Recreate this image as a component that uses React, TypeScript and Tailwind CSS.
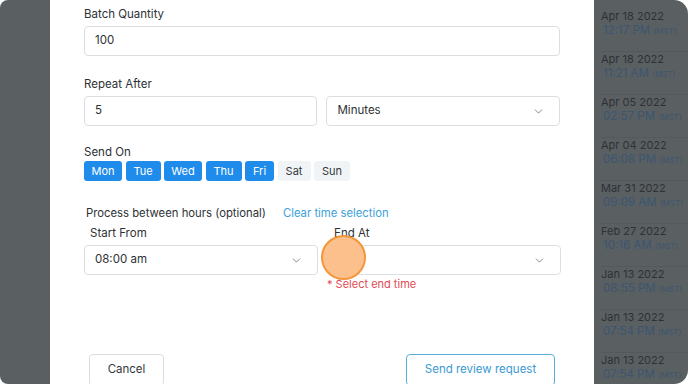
import { ChevronDown } from "lucide-react";

const days = [
    { label: "Mon", on: true, w: "w-[38px]" },
    { label: "Tue", on: true, w: "w-[35px]" },
    { label: "Wed", on: true, w: "w-[38px]" },
    { label: "Thu", on: true, w: "w-[36px]" },
    { label: "Fri", on: true, w: "w-[29px]" },
    { label: "Sat", on: false, w: "w-[33px]" },
    { label: "Sun", on: false, w: "w-[36px]" },
];

const history = [
    ["Apr 18 2022", "12:17 PM"],
    ["Apr 18 2022", "11:21 AM"],
    ["Apr 05 2022", "02:57 PM"],
    ["Apr 04 2022", "06:08 PM"],
    ["Mar 31 2022", "09:09 AM"],
    ["Feb 27 2022", "10:16 AM"],
    ["Jan 13 2022", "08:55 PM"],
    ["Jan 13 2022", "07:54 PM"],
    ["Jan 13 2022", "07:54 PM"],
];

function Select({ value }: { value?: string }) {
    return (
        <div className="flex h-[30px] w-[234px] items-center justify-between rounded-[4px] border border-[#dcdfe2] bg-white pl-[10px] pr-[14px] text-[11.5px] text-[#2d3135]">
            <span>{value}</span>
            <ChevronDown size={13} strokeWidth={1.5} className="text-[#6b7075]" />
        </div>
    );
}

export default function App() {
    return (
        <div
            className="h-[384px] w-[688px] overflow-hidden bg-white"
            style={{ fontFamily: "Inter, 'Noto Sans', sans-serif" }}
        >
            <div className="flex h-full overflow-hidden rounded-l-[8px] rounded-r-[14px]">
                {/* dimmed page, left */}
                <div className="w-[50px] shrink-0 bg-[#5a5f62]" />

                {/* modal */}
                <div className="relative w-[544px] shrink-0 bg-white px-[34px] pt-[6px]">
                    <p className="text-[11.5px] leading-[16px] text-[#2d3135]">Batch Quantity</p>
                    <div className="mt-[4px] flex h-[30px] w-[476px] items-center rounded-[4px] border border-[#dcdfe2] pl-[10px] text-[11.5px] text-[#2d3135]">
                        100
                    </div>

                    <p className="mt-[20px] text-[11.5px] leading-[16px] text-[#2d3135]">Repeat After</p>
                    <div className="mt-[4px] flex gap-[9px]">
                        <div className="flex h-[30px] w-[234px] items-center rounded-[4px] border border-[#dcdfe2] pl-[10px] text-[11.5px] text-[#2d3135]">
                            5
                        </div>
                        <Select value="Minutes" />
                    </div>

                    <p className="mt-[18px] text-[11.5px] leading-[16px] text-[#2d3135]">Send On</p>
                    <div className="mt-[1px] flex gap-[3.5px]">
                        {days.map((d) => (
                            <div
                                key={d.label}
                                className={`${d.w} flex h-[20px] items-center justify-center rounded-[3px] text-[11px] ${
                                    d.on ? "bg-[#1f8ceb] text-white" : "bg-[#f1f4f7] text-[#33383c]"
                                }`}
                            >
                                {d.label}
                            </div>
                        ))}
                    </div>

                    <div className="mt-[24px] flex items-center gap-[17px] pl-[2px] text-[11.3px] leading-[16px]">
                        <span className="text-[#2d3135]">Process between hours (optional)</span>
                        <span className="text-[#3d9fd9]">Clear time selection</span>
                    </div>

                    <div className="mt-[4px] flex gap-[9px]">
                        <div>
                            <p className="pl-[6px] text-[11.5px] leading-[16px] text-[#2d3135]">Start From</p>
                            <div className="mt-[4px]">
                                <Select value="08:00 am" />
                            </div>
                        </div>
                        <div>
                            <p className="pl-[7px] text-[11.5px] leading-[16px] text-[#2d3135]">End At</p>
                            <div className="mt-[4px]">
                                <Select />
                            </div>
                            <p className="mt-[2px] text-[11px] leading-[14px] text-[#e24a53]">* Select end time</p>
                        </div>
                    </div>

                    <div className="mt-[63px] flex justify-between pl-[5px] pr-[5px]">
                        <div className="flex h-[32px] w-[75px] items-center justify-center rounded-[4px] border border-[#d9dde0] text-[11.5px] text-[#33383c]">
                            Cancel
                        </div>
                        <div className="flex h-[32px] w-[149px] items-center justify-center rounded-[4px] border border-[#5aaedc] text-[11.5px] text-[#3a9ad3]">
                            Send review request
                        </div>
                    </div>

                    {/* click indicator */}
                    <div className="absolute left-[271px] top-[235px] h-[45px] w-[45px] rounded-full border-2 border-[#f3963c] bg-[#fbc08c]" />
                </div>

                {/* dimmed page, right */}
                <div className="flex-1 bg-[#5a5f62] pl-[7px] pt-[9px]">
                    {history.map(([date, time], i) => (
                        <div key={i} className="h-[43px] border-b border-[#54595c]">
                            <p className="text-[11px] leading-[15px] text-[#2e3235]">{date}</p>
                            <p className="whitespace-nowrap pl-[2px] text-[11.5px] leading-[13px] text-[#3b5671]">
                                {time} <span className="text-[8px] text-[#3d566d]">(MST)</span>
                            </p>
                        </div>
                    ))}
                </div>
            </div>
        </div>
    );
}
